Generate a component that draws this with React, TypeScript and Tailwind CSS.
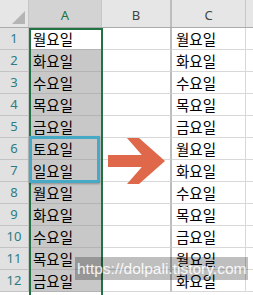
import React from 'react';

const colA = ['월요일', '화요일', '수요일', '목요일', '금요일', '토요일', '일요일', '월요일', '화요일', '수요일', '목요일', '금요일'];
const colC = ['월요일', '화요일', '수요일', '목요일', '금요일', '월요일', '화요일', '수요일', '목요일', '금요일', '월요일', '화요일'];

const cellFont = { fontFamily: '"Noto Sans CJK KR", "Noto Sans", sans-serif' };
const headFont = { fontFamily: '"Noto Sans", "Liberation Sans", sans-serif' };

export default function App() {
  return (
    <div className="relative w-[253px] h-[295px] overflow-hidden bg-white">
      {/* Column headers */}
      <div className="flex h-[28px] border-b border-[#ababab] bg-[#e6e6e6] text-[13px] text-[#444]" style={headFont}>
        <div className="w-[29px] shrink-0 border-r border-[#c6c6c6] flex items-end justify-end pr-[3px] pb-[3px]">
          <svg width="13" height="13" viewBox="0 0 13 13">
            <polygon points="13,0 13,13 0,13" fill="#b5b5b5" />
          </svg>
        </div>
        <div className="w-[73px] shrink-0 bg-[#d3d3d3] border-r border-[#c6c6c6] flex items-center justify-center pt-1 text-[#217346]">A</div>
        <div className="w-[70px] shrink-0 border-r-2 border-[#bdbdbd] flex items-center justify-center pt-1">B</div>
        <div className="w-[74px] shrink-0 border-r border-[#c6c6c6] flex items-center justify-center pt-1">C</div>
        <div className="flex-1" />
      </div>

      {/* Rows */}
      {colA.map((a, i) => (
        <div key={i} className="flex h-[22px]">
          <div
            className="w-[29px] shrink-0 bg-[#e1e1e1] border-b border-r border-[#c3c3c3] flex items-center justify-center text-[13px] text-[#2d7c83]"
            style={headFont}
          >
            {i + 1}
          </div>
          <div
            className={`w-[73px] shrink-0 border-b border-r border-[#b4b4b4] flex items-center pl-[4px] text-[14.5px] text-black ${i === 0 ? 'bg-white' : 'bg-[#c8c8c8]'}`}
            style={cellFont}
          >
            {a}
          </div>
          <div className="w-[70px] shrink-0 border-b border-r-2 border-b-[#d8d8d8] border-r-[#bdbdbd]" />
          <div
            className="w-[74px] shrink-0 border-b border-r border-[#d8d8d8] flex items-center pl-[4px] text-[14.5px] text-black"
            style={cellFont}
          >
            {colC[i]}
          </div>
          <div className="flex-1 border-b border-[#d8d8d8]" />
        </div>
      ))}

      {/* Column A selection outline */}
      <div className="absolute left-[29px] top-[28px] w-[74px] h-[280px] border-2 border-[#217346]" />

      {/* Blue box around rows 6-7 */}
      <div className="absolute left-[29px] top-[136px] w-[71px] h-[47px] border-[3px] border-[#46aac6] shadow-[0_1px_2px_rgba(0,0,0,0.3)]" />

      {/* Arrow */}
      <svg className="absolute left-[100px] top-[130px]" width="70" height="60" viewBox="0 0 70 60">
        <polygon points="8,25 50,25 50,37 8,37" fill="#e0684a" />
        <polygon points="27,8 39,8 65,31 39,54 27,54 47,31" fill="#e0684a" />
      </svg>

      {/* Watermark */}
      <div
        className="absolute left-[75px] top-[257px] w-[173px] h-[23px] bg-black/25 flex items-center pl-[2px] text-[15.5px] text-white/90 whitespace-nowrap"
        style={{ fontFamily: '"Liberation Sans", Arial, sans-serif' }}
      >
        https://dolpali.tistory.com
      </div>
    </div>
  );
}
